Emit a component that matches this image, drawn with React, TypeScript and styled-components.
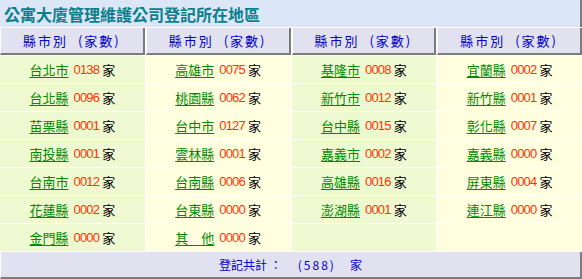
import React from "react";
import styled, { createGlobalStyle } from "styled-components";

const GlobalStyle = createGlobalStyle`
  html, body {
    margin: 0;
    padding: 0;
    background: #ffffff;
  }
  body {
    font-family: "Noto Sans CJK TC", "Liberation Sans", sans-serif;
  }
`;

const Board = styled.div`
  width: 582px;
  display: flex;
  flex-direction: column;
  gap: 1px;
  background: #ffffff;
`;

const Title = styled.div`
  height: 27px;
  box-sizing: border-box;
  padding-left: 4px;
  display: flex;
  align-items: center;
  background: #dbe6f6;
  border-right: 2px solid #7c7c7c;
  color: #0b7f8c;
  font-size: 16px;
  font-weight: bold;
  line-height: 1;
`;

const Grid = styled.div`
  display: grid;
  grid-template-columns: repeat(4, 1fr);
  gap: 1px;
`;

const HeadCell = styled.div`
  height: 27px;
  box-sizing: border-box;
  border-left: 1px solid #ffffff;
  border-right: 2px solid #7c7c7c;
  border-bottom: 2px solid #7c7c7c;
  background: #e1e1ef;
  color: #0000cc;
  font-size: 13px;
  letter-spacing: 2px;
  display: flex;
  align-items: center;
  justify-content: center;
  white-space: pre;
`;

const Cell = styled.div<{ $tone: "green" | "yellow" }>`
  height: 27px;
  background: ${(p) => (p.$tone === "green" ? "#eef9d2" : "#ffffe0")};
  display: flex;
  align-items: center;
  justify-content: center;
  font-size: 13px;
  line-height: 1;
  white-space: pre;
`;

const Place = styled.a`
  color: #008a00;
  text-decoration: underline;
  text-underline-offset: 2px;
  margin-right: 5px;
`;

const Count = styled.span`
  color: #ff3300;
  font-family: "Liberation Sans", sans-serif;
  font-size: 13px;
  letter-spacing: -0.8px;
  margin-right: 3px;
`;

const Unit = styled.span`
  color: #000000;
`;

const Footer = styled.div`
  height: 27px;
  box-sizing: border-box;
  border-left: 1px solid #ffffff;
  border-right: 2px solid #7c7c7c;
  border-bottom: 2px solid #7c7c7c;
  background: #e1e1ef;
  color: #0000cc;
  font-size: 12px;
  display: flex;
  align-items: center;
  justify-content: center;
  white-space: pre;
`;

const Total = styled.span`
  letter-spacing: 2px;
  margin: 0 14px 0 16px;
`;

type Entry = { name: string; count: string } | null;

const rows: Entry[][] = [
  [
    { name: "台北市", count: "0138" },
    { name: "高雄市", count: "0075" },
    { name: "基隆市", count: "0008" },
    { name: "宜蘭縣", count: "0002" },
  ],
  [
    { name: "台北縣", count: "0096" },
    { name: "桃園縣", count: "0062" },
    { name: "新竹市", count: "0012" },
    { name: "新竹縣", count: "0001" },
  ],
  [
    { name: "苗栗縣", count: "0001" },
    { name: "台中市", count: "0127" },
    { name: "台中縣", count: "0015" },
    { name: "彰化縣", count: "0007" },
  ],
  [
    { name: "南投縣", count: "0001" },
    { name: "雲林縣", count: "0001" },
    { name: "嘉義市", count: "0002" },
    { name: "嘉義縣", count: "0000" },
  ],
  [
    { name: "台南市", count: "0012" },
    { name: "台南縣", count: "0006" },
    { name: "高雄縣", count: "0016" },
    { name: "屏東縣", count: "0004" },
  ],
  [
    { name: "花蓮縣", count: "0002" },
    { name: "台東縣", count: "0000" },
    { name: "澎湖縣", count: "0001" },
    { name: "連江縣", count: "0000" },
  ],
  [
    { name: "金門縣", count: "0000" },
    { name: "其\u3000他", count: "0000" },
    null,
    null,
  ],
];

export default function App() {
  return (
    <>
      <GlobalStyle />
      <Board>
        <Title>公寓大廈管理維護公司登記所在地區</Title>
        <Grid>
          {[0, 1, 2, 3].map((i) => (
            <HeadCell key={i}>{"縣市別\u00a0\u00a0(家數)"}</HeadCell>
          ))}
          {rows.map((row, r) =>
            row.map((entry, c) => (
              <Cell key={`${r}-${c}`} $tone={c % 2 === 0 ? "green" : "yellow"}>
                {entry && (
                  <>
                    <Place href="#">{entry.name}</Place>
                    <Count>{entry.count}</Count>
                    <Unit>家</Unit>
                  </>
                )}
              </Cell>
            ))
          )}
        </Grid>
        <Footer>
          登記共計 ：<Total>(588)</Total>家
        </Footer>
      </Board>
    </>
  );
}
